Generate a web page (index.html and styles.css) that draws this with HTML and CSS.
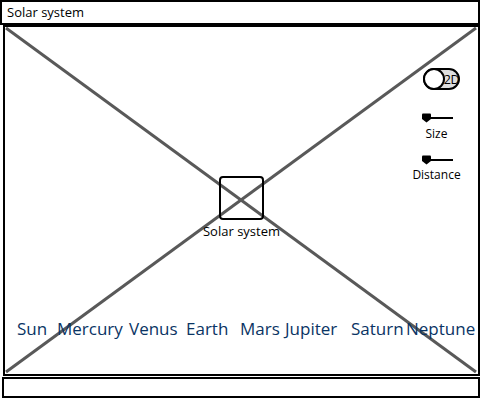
FILE: index.html
```html
<!DOCTYPE html>
<html lang="en">
<head>
<meta charset="utf-8">
<title>Solar system</title>
<link rel="stylesheet" href="styles.css">
</head>
<body>
<div class="window">
  <div class="titlebar">Solar system</div>
  <div class="canvas">
    <svg class="cross" viewBox="0 0 473 347" preserveAspectRatio="none" aria-hidden="true">
      <line x1="1" y1="1" x2="471" y2="345" />
      <line x1="471" y1="1" x2="1" y2="345" />
    </svg>
    <div class="controls">
      <svg class="toggle" width="37" height="22" viewBox="0 0 37 22">
        <rect x="1" y="1" width="35" height="20" rx="10" ry="10" fill="#dedede" stroke="#000" stroke-width="2"/>
        <circle cx="11" cy="11" r="10" fill="#fff" stroke="#000" stroke-width="2"/>
        <text x="28.5" y="15.5" text-anchor="middle" class="toggle-text">2D</text>
      </svg>
      <svg class="slider" width="34" height="10" viewBox="0 0 34 10">
        <line x1="4" y1="5" x2="33" y2="5" stroke="#000" stroke-width="2"/>
        <path d="M2 1.5 Q2 0.5 3 0.5 H10 Q11 0.5 11 1.5 V6 L6.5 9.5 L2 6 Z" fill="#000"/>
      </svg>
      <div class="label size-label">Size</div>
      <svg class="slider slider2" width="34" height="10" viewBox="0 0 34 10">
        <line x1="4" y1="5" x2="33" y2="5" stroke="#000" stroke-width="2"/>
        <path d="M2 1.5 Q2 0.5 3 0.5 H10 Q11 0.5 11 1.5 V6 L6.5 9.5 L2 6 Z" fill="#000"/>
      </svg>
      <div class="label distance-label">Distance</div>
    </div>
    <div class="center">
      <div class="sun-box"></div>
      <div class="center-label">Solar system</div>
    </div>
    <div class="planets">
      <span>Sun</span>
      <span>Mercury</span>
      <span>Venus</span>
      <span>Earth</span>
      <span>Mars</span>
      <span>Jupiter</span>
      <span>Saturn</span>
      <span>Neptune</span>
    </div>
  </div>
  <div class="statusbar"></div>
</div>
</body>
</html>
```
FILE: styles.css
```css
* { box-sizing: border-box; }
html, body { margin: 0; padding: 0; background: #fff; }
body { width: 481px; height: 400px; overflow: hidden; }

.window {
  width: 481px;
  height: 400px;
  display: flex;
  flex-direction: column;
  font-family: "Open Sans", "Liberation Sans", sans-serif;
  color: #000;
}

.titlebar {
  width: 480px;
  height: 25px;
  border: 2px solid #000;
  padding-left: 5px;
  font-size: 13px;
  line-height: 20px;
}

.canvas {
  position: relative;
  margin-left: 3px;
  width: 477px;
  height: 351px;
  border: 2px solid #000;
  display: grid;
  grid-template-columns: 1fr;
  grid-template-rows: 1fr;
}

.cross {
  position: absolute;
  left: 0;
  top: 0;
  width: 100%;
  height: 100%;
}
.cross line {
  stroke: #595959;
  stroke-width: 3;
  vector-effect: non-scaling-stroke;
}

.controls, .center, .planets {
  grid-area: 1 / 1;
  position: relative;
}

.controls {
  justify-self: end;
  align-self: start;
  margin-top: 41px;
  margin-right: 16px;
  width: 51px;
  display: flex;
  flex-direction: column;
  align-items: center;
}
.toggle { display: block; align-self: flex-end; margin-right: 2px; }
.toggle-text {
  font-family: "Open Sans", "Liberation Sans", sans-serif;
  font-size: 12.5px;
  letter-spacing: -0.4px;
  fill: #000;
}
.slider { display: block; margin-top: 23px; margin-left: 1px; }
.slider2 { margin-top: 13px; }
.label { font-size: 12px; line-height: 16px; white-space: nowrap; }
.size-label { margin-top: 3px; }
.distance-label { margin-top: 2px; }

.center {
  justify-self: center;
  align-self: start;
  margin-top: 149px;
  display: flex;
  flex-direction: column;
  align-items: center;
}
.sun-box {
  width: 45px;
  height: 44px;
  border: 2px solid #000;
  border-radius: 4px;
}
.center-label {
  font-size: 13px;
  line-height: 18px;
  margin-top: 2px;
  white-space: nowrap;
}

.planets {
  align-self: end;
  margin-bottom: 33px;
  padding-left: 12px;
  display: grid;
  grid-template-columns: 40px 72px 57px 54px 45px 66px 55px auto;
  font-size: 17px;
  line-height: 24px;
  color: #0a3464;
  white-space: nowrap;
}

.statusbar {
  margin-top: 1px;
  margin-left: 2px;
  width: 478px;
  height: 21px;
  border: 2px solid #000;
}
```
